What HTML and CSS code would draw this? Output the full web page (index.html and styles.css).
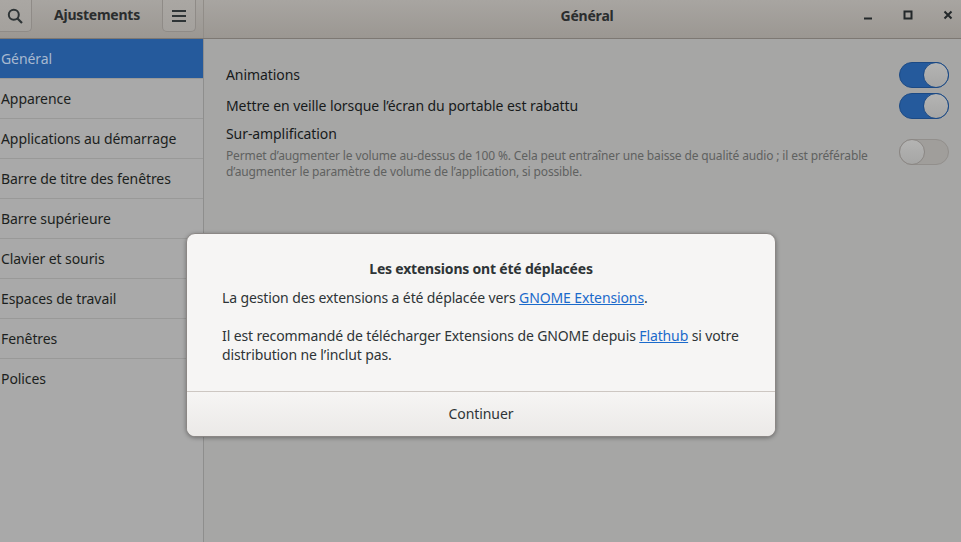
FILE: index.html
```html
<!DOCTYPE html>
<html lang="fr">
<head>
<meta charset="utf-8">
<title>Ajustements</title>
<link rel="stylesheet" href="styles.css">
</head>
<body>
<div class="window">
  <header class="titlebar">
    <div class="title-left">
      <button class="hbtn search-btn" aria-label="Rechercher">
        <svg width="16" height="16" viewBox="0 0 16 16"><circle cx="6.8" cy="6.8" r="5" fill="none" stroke="#2e3436" stroke-width="2"/><path d="M10.5 10.5L15 15" stroke="#2e3436" stroke-width="2.2" fill="none"/></svg>
      </button>
      <span class="app-title">Ajustements</span>
      <button class="hbtn menu-btn" aria-label="Menu">
        <svg width="16" height="14" viewBox="0 0 16 14"><path d="M1 2h14M1 7h14M1 12h14" stroke="#2e3436" stroke-width="2" fill="none"/></svg>
      </button>
    </div>
    <div class="title-right">
      <span class="page-title">Général</span>
      <div class="wm-buttons">
        <svg width="10" height="10" viewBox="0 0 10 10"><path d="M1 8.5h8" stroke="#23282a" stroke-width="2"/></svg>
        <svg width="10" height="10" viewBox="0 0 10 10"><rect x="1.5" y="1.5" width="7" height="7" fill="none" stroke="#23282a" stroke-width="2"/></svg>
        <svg width="10" height="10" viewBox="0 0 10 10"><path d="M1.5 1.5l7 7M8.5 1.5l-7 7" stroke="#23282a" stroke-width="2"/></svg>
      </div>
    </div>
  </header>
  <div class="body">
    <nav class="sidebar">
      <div class="row selected">Général</div>
      <div class="row">Apparence</div>
      <div class="row">Applications au démarrage</div>
      <div class="row">Barre de titre des fenêtres</div>
      <div class="row">Barre supérieure</div>
      <div class="row">Clavier et souris</div>
      <div class="row">Espaces de travail</div>
      <div class="row">Fenêtres</div>
      <div class="row">Polices</div>
    </nav>
    <main class="content">
      <div class="setting s1"><span class="label">Animations</span><span class="switch on"><i></i></span></div>
      <div class="setting s2"><span class="label">Mettre en veille lorsque l’écran du portable est rabattu</span><span class="switch on"><i></i></span></div>
      <div class="setting s3">
        <div class="text">
          <div class="label">Sur-amplification</div>
          <div class="desc">Permet d’augmenter le volume au-dessus de 100 %. Cela peut entraîner une baisse de qualité audio ; il est préférable<br>d’augmenter le paramètre de volume de l’application, si possible.</div>
        </div>
        <span class="switch off"><i></i></span>
      </div>
    </main>
  </div>
  <div class="dialog">
    <div class="dialog-body">
      <h2>Les extensions ont été déplacées</h2>
      <p class="p1">La gestion des extensions a été déplacée vers <a href="#">GNOME Extensions</a>.</p>
      <p class="p2">Il est recommandé de télécharger Extensions de GNOME depuis <a href="#">Flathub</a> si votre<br>distribution ne l’inclut pas.</p>
    </div>
    <div class="dialog-action">Continuer</div>
  </div>
</div>
</body>
</html>
```
FILE: styles.css
```css
* { box-sizing: border-box; }
html, body { margin: 0; height: 100%; overflow: hidden; }
body { font-family: "Noto Sans", sans-serif; font-size: 14px; letter-spacing: -0.08px; color: #171a1b; background: #a6a6a5; }
.window { position: relative; width: 961px; height: 542px; display: flex; flex-direction: column; }
.titlebar { height: 39px; display: flex; background: linear-gradient(#a8a5a1, #9b9792); border-bottom: 1px solid #7d7873; flex: none; }
.title-left { width: 204px; display: flex; align-items: flex-start; border-right: 1px solid #918d88; flex: none; }
.hbtn { height: 32px; border: 1px solid #8f8b87; border-top: 0; border-radius: 0 0 5px 5px; background: linear-gradient(#aaa7a3, #a4a19d); padding: 0; display: flex; align-items: center; justify-content: center; flex: none; }
.search-btn { width: 32px; padding-right: 2px; border-left: 0; border-radius: 0 0 5px 0; }
.menu-btn { width: 34px; }
.app-title { width: 130px; text-align: center; font-weight: 700; color: #2a2d2e; line-height: 30px; letter-spacing: -0.25px; }
.title-right { flex: 1; display: flex; position: relative; align-items: center; justify-content: center; }
.page-title { font-weight: 700; color: #2a2d2e; margin-top: -8px; margin-left: 9px; letter-spacing: -0.2px; }
.wm-buttons { position: absolute; right: 8px; top: 10px; display: flex; gap: 30px; }
.body { flex: 1; display: flex; min-height: 0; }
.sidebar { width: 204px; flex: none; background: #a9a9a9; border-right: 1px solid #8e8e8d; }
.row { height: 40px; padding-left: 1px; display: flex; align-items: center; border-bottom: 1px solid #999998; color: #1c1f20; }
.row:last-child { border-bottom-color: transparent; }
.row.selected { background: #255a9c; color: #a8b9d0; }
.content { flex: 1; padding: 21px 12px 0 22px; }
.setting { display: flex; justify-content: space-between; align-items: center; }
.s1 { height: 30px; margin-bottom: 1px; }
.s2 { height: 30px; }
.s3 { align-items: flex-start; margin-top: 3px; }
.desc { font-size: 12px; line-height: 16px; color: #5f6160; margin-top: 4px; letter-spacing: -0.14px; }
.label { line-height: 20px; }
.switch { width: 50px; height: 26px; border-radius: 13px; border: 1px solid #1c4a85; background: #255a9c; display: flex; justify-content: flex-end; flex: none; }
.switch i { width: 26px; height: 26px; margin: -1px; border-radius: 50%; background: linear-gradient(#b4b4b3, #a6a6a5); border: 1px solid #1c4a85; }
.switch.off { background: #a09e9b; border-color: #928f8c; justify-content: flex-start; margin-top: 15px; }
.switch.off i { border-color: #8b8784; }
.dialog { position: absolute; left: 186px; top: 233px; width: 590px; height: 204px; background: #f6f5f4; border: 1px solid #8b8785; border-radius: 9px; box-shadow: 0 1px 4px rgba(0,0,0,.35); display: flex; flex-direction: column; overflow: hidden; color: #2e3436; }
.dialog-body { flex: 1; padding: 0 20px 0 35px; }
.dialog-body h2 { margin: 25px 15px 0 0; font-size: 14px; line-height: 20px; font-weight: 700; text-align: center; letter-spacing: -0.2px; }
.dialog-body p { margin: 0; line-height: 19px; letter-spacing: -0.12px; white-space: nowrap; }
.p1 { margin-top: 9px !important; }
.p2 { margin-top: 19px !important; }
.dialog-body a { color: #1b6acb; }
.dialog-action { height: 45px; padding-bottom: 2px; border-top: 1px solid #cdc7c2; background: linear-gradient(#f6f5f4, #ebe9e7); display: flex; align-items: center; justify-content: center; flex: none; }
```
